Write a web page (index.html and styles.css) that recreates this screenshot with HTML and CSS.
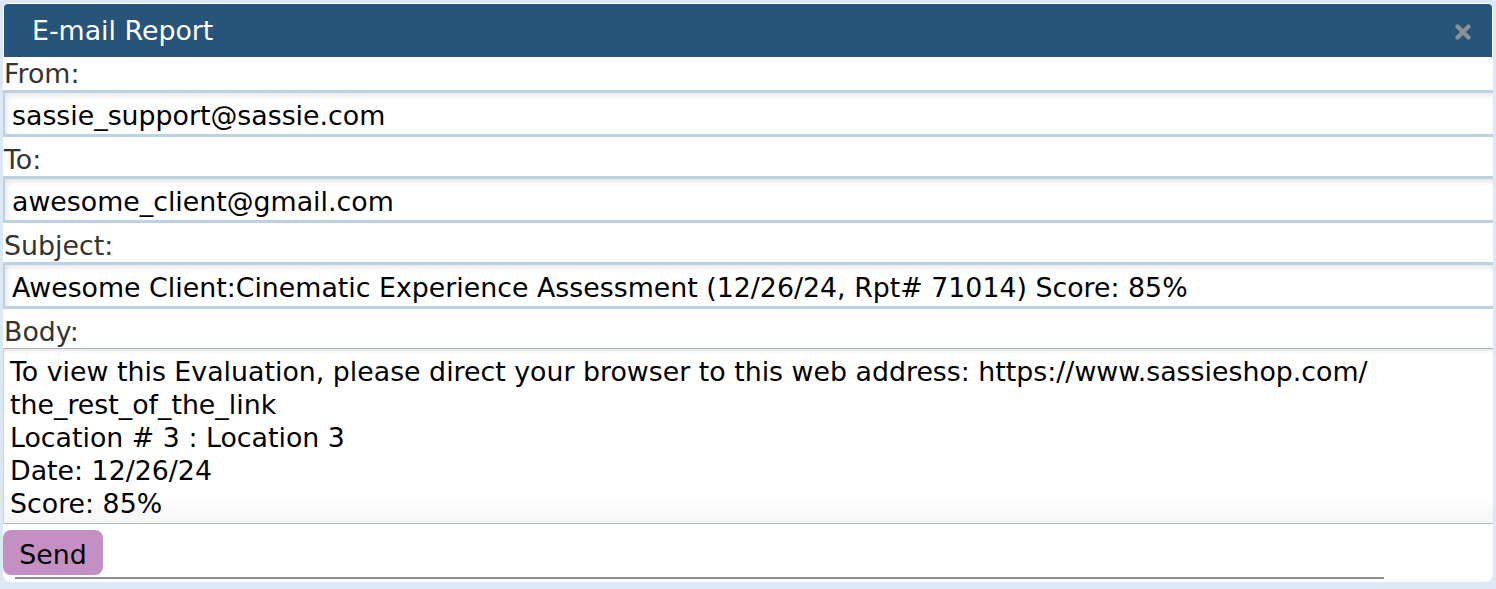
FILE: index.html
```html
<!DOCTYPE html>
<html>
<head>
<meta charset="utf-8">
<link rel="stylesheet" href="styles.css">
</head>
<body>
<div class="dialog">
  <div class="titlebar">
    <span class="title">E-mail Report</span>
    <svg class="close" width="16" height="16" viewBox="0 0 16 16"><path d="M2.5 2.5 L13.5 13.5 M13.5 2.5 L2.5 13.5" stroke="#8a9097" stroke-width="4.2" stroke-linecap="round"/></svg>
  </div>
  <div class="form">
    <label class="lbl">From:</label>
    <div class="field">sassie_support@sassie.com</div>
    <label class="lbl">To:</label>
    <div class="field">awesome_client@gmail.com</div>
    <label class="lbl">Subject:</label>
    <div class="field">Awesome Client:Cinematic Experience Assessment (12/26/24, Rpt# 71014) Score: 85%</div>
    <label class="lbl">Body:</label>
    <div class="body">To view this Evaluation, please direct your browser to this web address: https://www.sassieshop.com/<br>the_rest_of_the_link<br>Location # 3 : Location 3<br>Date: 12/26/24<br>Score: 85%</div>
    <div class="actions"><button class="send">Send</button></div>
    <div class="rule"></div>
  </div>
</div>
</body>
</html>
```
FILE: styles.css
```css
html, body {
  margin: 0;
  padding: 0;
  background: #dce8f3;
  font-family: "DejaVu Sans", Verdana, sans-serif;
}
body {
  padding: 3px 3px 0 3px;
  height: 589px;
  box-sizing: border-box;
}
.dialog {
  background: #fff;
  border-radius: 6px 6px 8px 8px;
  height: 579px;
  box-sizing: border-box;
  display: flex;
  flex-direction: column;
}
.titlebar {
  background: #26547a;
  height: 53px;
  margin: 1px 1px 0 1px;
  border-radius: 4px 4px 0 0;
  display: flex;
  align-items: center;
  justify-content: space-between;
  padding: 0 21px 0 28px;
  box-sizing: border-box;
}
.title {
  color: #fff;
  font-size: 26.8px;
  line-height: 32px;
}
.close {
  display: block;
  margin-top: 3px;
}
.form {
  display: flex;
  flex-direction: column;
}
.lbl {
  font-size: 26.8px;
  color: #333;
  line-height: 33px;
  height: 33px;
  padding-left: 1px;
}
.field {
  border-top: 3px solid #bcd2e0;
  border-bottom: 3px solid #bcd2e0;
  border-left: 2px solid #bcd2e0;
  box-shadow: inset 0 5px 6px -3px #e2e2e2, inset 5px 0 6px -4px #e2e2e2;
  line-height: 39px;
  font-size: 26.8px;
  color: #000;
  padding: 3px 0 0 7px;
  box-sizing: border-box;
  height: 47px;
  margin-bottom: 6px;
  white-space: nowrap;
}
.body {
  border-top: 1px solid #a9b5bc;
  border-bottom: 1px solid #a8c0bf;
  border-left: 1px solid #c6d4dc;
  font-size: 26.8px;
  line-height: 33px;
  padding: 6px 6px 3px 6px;
  height: 176px;
  box-sizing: border-box;
  color: #000;
  background: linear-gradient(#fff, #fff 85%, #f5f5f5);
  box-shadow: inset 0 3px 4px -2px #dcdcdc;
  white-space: nowrap;
}
.actions {
  padding-top: 6px;
}
.send {
  display: block;
  font-family: "DejaVu Sans", Verdana, sans-serif;
  font-size: 26.8px;
  background: #c490c4;
  border: none;
  border-radius: 8px;
  width: 100px;
  height: 45px;
  color: #000;
  padding: 3px 0 0 0;
}
.rule {
  margin: 2px 0 0 12px;
  width: 1369px;
  height: 2px;
  background: #8c8c8c;
}
```
